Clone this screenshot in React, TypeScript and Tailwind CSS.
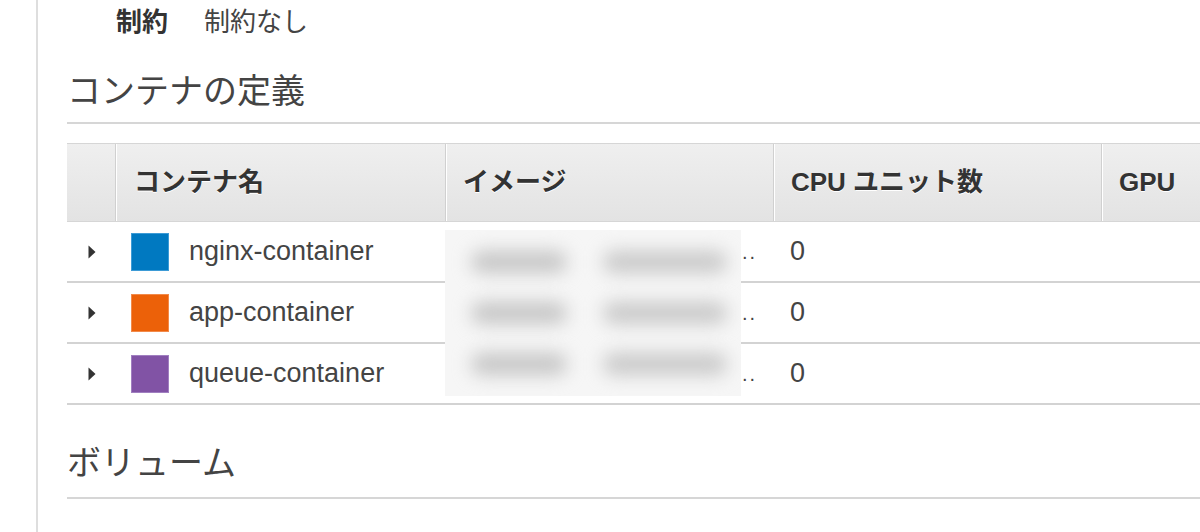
import React from 'react'

const font = { fontFamily: '"Liberation Sans", "Noto Sans CJK JP", sans-serif' }

const containers = [
  { name: 'nginx-container', color: 'bg-[#0079c1] border-[#3d9bd6]', cpu: '0' },
  { name: 'app-container', color: 'bg-[#ec6109] border-[#f28a4a]', cpu: '0' },
  { name: 'queue-container', color: 'bg-[#8153a5] border-[#a07fc0]', cpu: '0' },
]

const Caret = () => (
  <svg viewBox="0 0 8 14" className="w-[8px] h-[14px] shrink-0 text-[#333]">
    <path d="M0.5 0.5 L7.5 7 L0.5 13.5 Z" fill="currentColor" />
  </svg>
)

const App = () => {
  return (
    <div className="w-[1200px] h-[532px] overflow-hidden bg-white flex text-[#444]" style={font}>
      <div className="w-[36px] shrink-0" />
      <div className="flex-1 border-l-2 border-[#dedede] pl-[29px]">
        {/* constraint row */}
        <div className="mt-[6px] h-[32px] flex items-center text-[26px] leading-[32px]">
          <span className="w-[88px] pl-[49px] box-content font-bold text-[#333]">制約</span>
          <span>制約なし</span>
        </div>

        {/* container definitions */}
        <h2 className="mt-[33px] text-[34px] leading-[40px] pb-[11px] border-b-2 border-[#d6d6d6] font-normal">
          コンテナの定義
        </h2>

        <div className="mt-[19px]">
          <div className="grid grid-cols-[48px_330px_328px_328px_1fr] h-[79px] border-t border-[#cfcfcf] bg-linear-to-b from-[#efefef] to-[#e3e3e3] border-b border-[#d6d6d6] text-[26px] font-bold text-[#333] [text-shadow:0_1px_0_#fff]">
            <div />
            <div className="flex items-center pl-[18px] border-l border-[#d0d0d0] shadow-[inset_1px_0_0_#fff]">コンテナ名</div>
            <div className="flex items-center pl-[17px] border-l border-[#d0d0d0] shadow-[inset_1px_0_0_#fff]">イメージ</div>
            <div className="flex items-center pl-[17px] border-l border-[#d0d0d0] shadow-[inset_1px_0_0_#fff]">CPU ユニット数</div>
            <div className="flex items-center pl-[17px] border-l border-[#d0d0d0] shadow-[inset_1px_0_0_#fff]">GPU</div>
          </div>

          <div className="relative">
            {containers.map((c) => (
              <div
                key={c.name}
                className="grid grid-cols-[48px_330px_328px_328px_1fr] h-[61px] border-b-2 border-[#d3d3d3] text-[27px]"
              >
                <div className="flex items-center pl-[21px]">
                  <Caret />
                </div>
                <div className="flex items-center pl-[16px]">
                  <span className={`w-[38px] h-[38px] border ${c.color}`} />
                  <span className="ml-[20px]">{c.name}</span>
                </div>
                <div className="flex items-center justify-end pr-[16px] text-[20px] tracking-[2px]">..</div>
                <div className="flex items-center pl-[17px]">{c.cpu}</div>
                <div />
              </div>
            ))}

            {/* masked image uris */}
            <div className="absolute left-[378px] top-[8px] w-[296px] h-[166px] bg-[#f6f6f6] flex flex-col justify-around py-[6px] overflow-hidden">
              {containers.map((c) => (
                <div key={c.name} className="flex items-center h-[40px] pl-[26px] gap-[36px]">
                  <span className="w-[96px] h-[22px] rounded-full bg-[#c6c6c6] blur-[9px]" />
                  <span className="w-[124px] h-[22px] rounded-full bg-[#c9c9c9] blur-[9px]" />
                </div>
              ))}
            </div>
          </div>
        </div>

        {/* volumes */}
        <h2 className="mt-[38px] text-[34px] leading-[40px] pb-[14px] border-b-2 border-[#d6d6d6] font-normal">
          ボリューム
        </h2>
      </div>
    </div>
  )
}

export default App
